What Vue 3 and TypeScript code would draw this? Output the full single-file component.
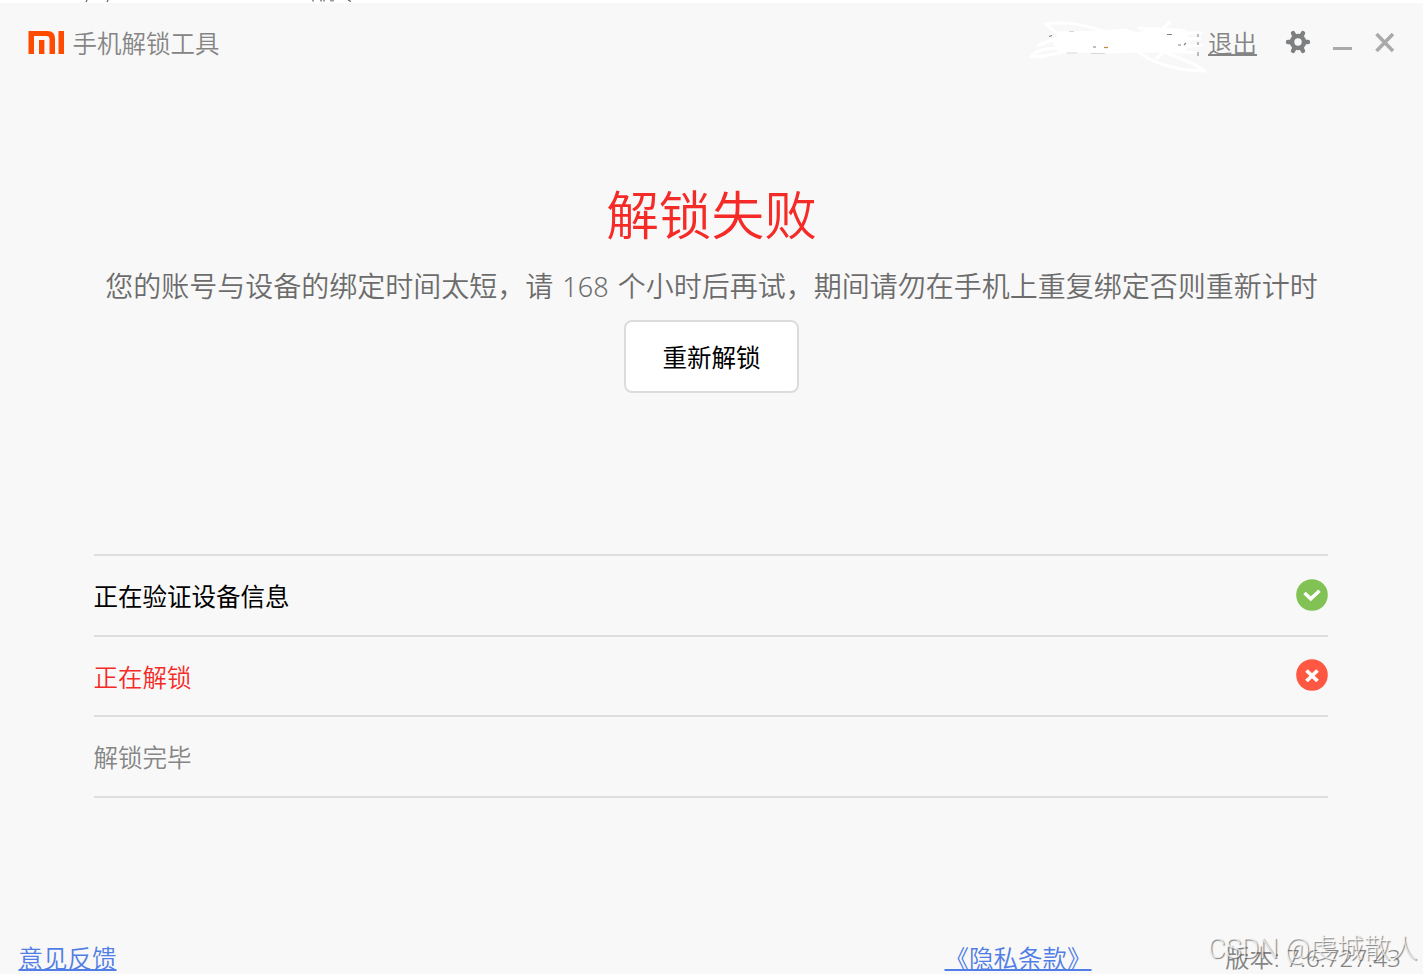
<script setup lang="ts">
type StepState = 'done' | 'failed' | 'pending'
interface Step {
  label: string
  state: StepState
}
const steps: Step[] = [
  { label: '正在验证设备信息', state: 'done' },
  { label: '正在解锁', state: 'failed' },
  { label: '解锁完毕', state: 'pending' },
]
</script>

<template>
  <div class="page">
    <svg class="edge" width="1423" height="3" viewBox="0 0 1423 3">
      <path d="M87 0l-1 2M108 0l-1 2M313 0v1.5M321 0v1.5M324 0v1.5M331 0v1.5M333 0v1.5M348 0l3 1.5" stroke="#666" stroke-width="1.3" fill="none" />
    </svg>
    <main class="window">
      <header class="titlebar">
        <svg class="logo" width="36" height="23" viewBox="0 0 36 23" fill="#ff4b00">
          <path d="M0.500 0H19.500Q27 0 27 7.500V23H21.500V8.200Q21.500 5 18.300 5H6V23H0.500Z" />
          <path d="M11 9H16.400V23H11ZM30.500 0H36V23H30.500Z" />
        </svg>
        <h1 class="app-name">手机解锁工具</h1>
        <svg class="account" width="180" height="52" viewBox="0 0 180 52" fill="none" stroke-linecap="round" stroke-linejoin="round">
          <g stroke="#fff" stroke-width="3">
            <path d="M17 3C38 0 57 4 80 12M17 3C23 10 31 14 43 17M10 24L29 17M2 36C8 28 20 27 36 27M2 36C20 36 34 30 49 27M110 7L155 10M141 1L128 13M107 29C122 43 152 50 176 50C166 43 149 36 132 30M128 37L142 26" />
            <path d="M150 12L172 12M150 19L171 17M150 26L172 24M148 30L169 32" />
          </g>
          <path d="M31 12L75 11L95 9L109 13L124 8L150 9L160 18L155 31L127 30L109 30L80 31L61 30L32 30L25 23Z" fill="#fff" stroke="#fff" stroke-width="3" />
          <path d="M40 10.500h5M38 32h10M62 32.500h14" stroke="#d8d8d8" stroke-width="1" stroke-linecap="butt" />
          <path d="M20 15.500l3-1M64 26h3M138 13.500h5M149 24h3M155 24l2-2" stroke="#858087" stroke-width="1.200" stroke-linecap="butt" />
          <path d="M75 26.500h4" stroke="#c28b49" stroke-width="1.300" stroke-linecap="butt" />
          <path d="M169 13v3M169 21v3M169 31v4" stroke="#bbb" stroke-width="2" stroke-linecap="butt" />
        </svg>
        <a class="logout">退出</a>
        <svg class="gear" width="26" height="24" viewBox="-13 -12 26 24">
          <g stroke="#7d7f80" stroke-width="4.400" stroke-linecap="round">
            <path d="M-10 0H10M-5 -8.900L5 8.900M5 -8.900L-5 8.900" />
          </g>
          <circle r="8.300" fill="#7d7f80" />
          <circle r="3.700" fill="#f8f8f8" />
        </svg>
        <svg class="controls" width="62" height="24" viewBox="0 0 62 24" fill="none" stroke="#aaa">
          <path d="M0 18.500H19" stroke-width="3" />
          <path d="M43.500 4L60 21M60 4L43.500 21" stroke-width="3.500" />
        </svg>
      </header>

      <section class="result">
        <h2 class="headline">解锁失败</h2>
        <p class="message">您的账号与设备的绑定时间太短，请<span class="hours"> 168 </span>个小时后再试，期间请勿在手机上重复绑定否则重新计时</p>
        <button class="retry" type="button">重新解锁</button>
      </section>

      <ul class="steps">
        <li v-for="step in steps" :key="step.label" class="step" :class="step.state">
          <span class="label">{{ step.label }}</span>
          <svg v-if="step.state !== 'pending'" class="status" width="32" height="32" viewBox="0 0 32 32" fill="none" stroke="#fff">
            <circle cx="16" cy="16" r="15.800" stroke="none" :fill="step.state === 'done' ? '#82c255' : '#ff5842'" />
            <path v-if="step.state === 'done'" d="M8.500 14L14.800 19.800L23.500 11.800" stroke-width="3.500" />
            <path v-else d="M10.500 11.500L21.500 22M21.500 11.500L10.500 22" stroke-width="3.800" />
          </svg>
        </li>
      </ul>

      <footer class="footer">
        <a class="link">意见反馈</a>
        <a class="link privacy">《隐私条款》</a>
        <span class="version">版本: 7.6.727.43</span>
      </footer>
    </main>
    <div class="watermark">CSDN @虔城散人</div>
  </div>
</template>

<style>
body {
  overflow: hidden;
}
</style>

<style scoped>
.page {
  position: relative;
  display: flex;
  flex-direction: column;
  width: 1423px;
  height: 974px;
  overflow: hidden;
  background: #fff;
  font-family: "Noto Sans CJK SC", "Noto Sans", sans-serif;
  font-size: 24.5px;
  font-weight: 350;
  line-height: 36px;
}
.edge {
  display: block;
  flex: none;
}
.window {
  flex: 1;
  display: flex;
  flex-direction: column;
  min-height: 0;
  background: #f8f8f8;
}
.titlebar {
  display: flex;
  align-items: flex-start;
  height: 80px;
  padding: 0 28px;
  color: #858585;
}
.logo {
  margin-top: 28px;
}
.app-name {
  margin: 22px 0 0 8.500px;
  font-size: 24.5px;
  font-weight: 350;
}
.account {
  margin: 18px 0 0 auto;
}
.logout {
  margin: 22px 0 0 -1px;
  text-decoration: underline;
  text-decoration-thickness: 2px;
  text-underline-offset: 1px;
}
.gear {
  margin: 27px 0 0 28px;
}
.controls {
  margin: 27px 0 0 22px;
}
.result {
  display: flex;
  flex-direction: column;
  align-items: center;
  height: 471px;
  box-sizing: border-box;
  padding-top: 89px;
}
.headline {
  margin: 0;
  color: #f52b28;
  font-size: 52.7px;
  font-weight: 350;
  line-height: 80px;
}
.message {
  margin: 12px 0 0;
  color: #6c6c6c;
  font-size: 28px;
  line-height: 42px;
  white-space: nowrap;
}
.hours {
  font-family: "Noto Sans", sans-serif;
  font-size: 27px;
  font-weight: 350;
  word-spacing: 2px;
}
.retry {
  width: 175px;
  height: 73px;
  margin-top: 12px;
  padding: 1px 0 0;
  border: 2px solid #dcdcdc;
  border-radius: 8px;
  background: #fff;
  color: #000;
  font: 400 24.5px/36px "Noto Sans CJK SC", sans-serif;
}
.steps {
  width: 1234px;
  margin: 0 0 0 93.500px;
  padding: 0;
  border-top: 2px solid #dedede;
  list-style: none;
}
.step {
  display: flex;
  align-items: center;
  justify-content: space-between;
  height: 80.500px;
  box-sizing: border-box;
  border-bottom: 2px solid #dedede;
}
.label {
  margin-top: 2px;
}
.status {
  display: block;
  margin-top: -1px;
}
.done {
  color: #000;
  font-weight: 400;
}
.failed {
  color: #f52b28;
}
.pending {
  color: #858585;
}
.footer {
  display: flex;
  height: 36px;
  margin-top: auto;
  margin-bottom: -2px;
  padding: 0 22px 0 18.500px;
}
.link {
  color: #517ee6;
  text-decoration: underline;
  text-decoration-thickness: 2px;
  text-underline-offset: 1px;
}
.privacy {
  margin-left: 828px;
}
.version {
  margin-left: auto;
  color: #858585;
  font-family: "Noto Sans", "Noto Sans CJK SC", sans-serif;
  font-size: 24.3px;
}
.watermark {
  position: absolute;
  top: 930px;
  left: 1208px;
  color: rgba(255, 255, 255, 0.75);
  font-family: Roboto, "Noto Sans CJK SC", sans-serif;
  font-size: 27px;
  font-weight: 300;
  line-height: 38px;
  white-space: nowrap;
  text-shadow: 1px 1px 1px rgba(60, 60, 60, 0.65);
}
</style>
